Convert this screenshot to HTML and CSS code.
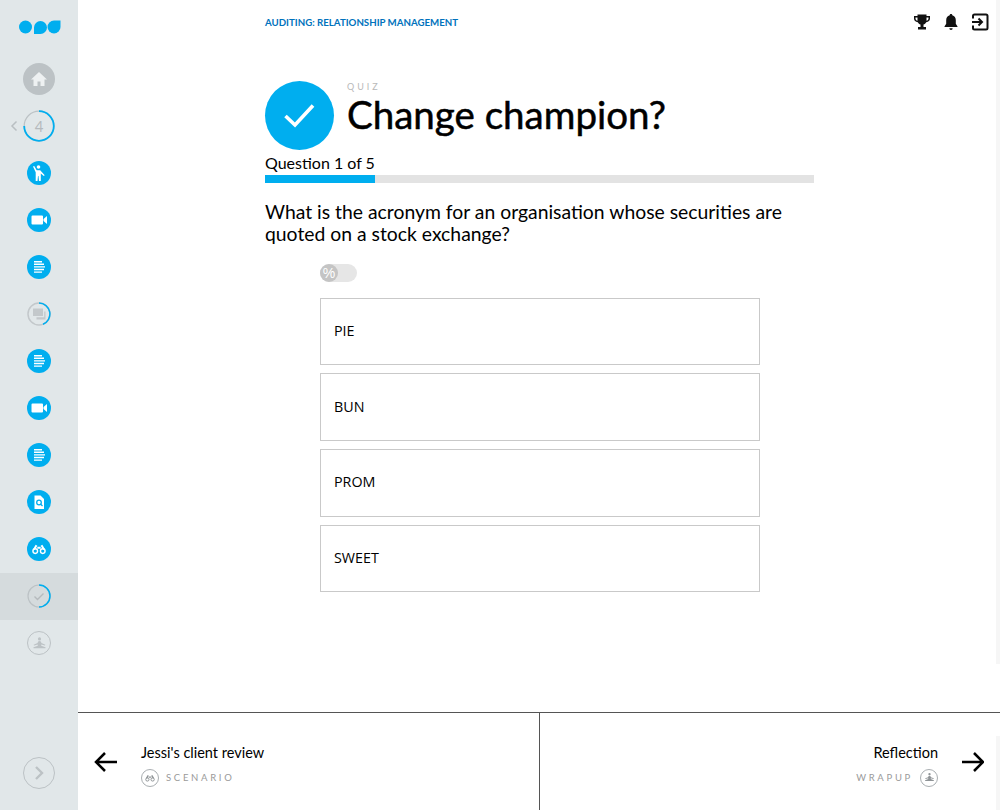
FILE: index.html
```html
<!DOCTYPE html>
<html lang="en">
<head>
    <meta charset="UTF-8">
    <title>Change champion?</title>
    <link rel="stylesheet" href="styles.css">
</head>
<body>
    <svg class="defs" width="0" height="0">
        <symbol id="lines" viewBox="0 0 24 24">
            <path d="M7 6h8v1.400H7zM7 8.600h10v1.400H7zM7 11.200h11v1.400H7zM7 13.800h10v1.400H7zM7 16.400h8v1.400H7z" fill="#fff"/>
        </symbol>
        <symbol id="video" viewBox="0 0 24 24">
            <path d="M5.500 7.500h9.500a1 1 0 0 1 1 1v7a1 1 0 0 1-1 1H5.500a1 1 0 0 1-1-1v-7a1 1 0 0 1 1-1zM16.500 11l3.500-3v8l-3.500-3z" fill="#fff"/>
        </symbol>
        <symbol id="binoculars" viewBox="0 0 24 24">
            <path d="M9 7.500l-3 5M15 7.500l3 5M10 10.500h4" stroke="currentColor" stroke-width="2.400" fill="none"/>
            <circle cx="7.500" cy="14.500" r="2.800" stroke="currentColor" stroke-width="1.700" fill="none"/>
            <circle cx="16.500" cy="14.500" r="2.800" stroke="currentColor" stroke-width="1.700" fill="none"/>
        </symbol>
        <symbol id="meditate" viewBox="3 3 18 18">
            <circle cx="12" cy="6.500" r="1.900"/>
            <path d="M12 9c1.500 0 2 1 2.300 2.400l4.700 2-.5 1-4.400-1.300v1.500l4.900 2c.6.300.4 1.200-.3 1.200H5.300c-.7 0-.9-.9-.3-1.200l4.900-2v-1.500l-4.400 1.300-.5-1 4.700-2C10 10 10.500 9 12 9z"/>
        </symbol>
    </svg>

    <nav class="sidebar">
        <svg class="logo" width="42" height="14" viewBox="0 0 42 14">
            <circle cx="6.500" cy="7" r="6.500" fill="#00aeef"/>
            <path d="M15 14h6.500A6.500 6.500 0 1 0 15 7.500z" fill="#00aeef"/>
            <path d="M41.500 0.500H35A6.500 6.500 0 1 0 41.500 7z" fill="#00aeef"/>
        </svg>
        <ul class="steps">
            <li class="step">
                <span class="home">
                    <svg width="18" height="18" viewBox="0 0 18 18"><path d="M9 2L1 9.500h2.500V16h4v-4.500h3V16h4V9.500H17z" fill="#eef1f2"/></svg>
                </span>
            </li>
            <li class="step">
                <svg class="back" width="8" height="12" viewBox="0 0 8 12"><path d="M6.500 1.500L2 6l4.500 4.500" stroke="#b9bfc2" stroke-width="1.500" fill="none"/></svg>
                <svg width="32" height="32" viewBox="0 0 32 32">
                    <circle cx="16" cy="16" r="14.800" fill="none" stroke="#bcc2c5" stroke-width="1.200"/>
                    <path d="M16 1.200A14.800 14.800 0 1 1 1.200 16" fill="none" stroke="#00aeef" stroke-width="1.800"/>
                </svg>
                <span class="step-num">4</span>
            </li>
            <li class="step">
                <span class="dot">
                    <svg width="24" height="24" viewBox="0 0 24 24">
                        <circle cx="11.500" cy="6" r="1.800" fill="#fff"/>
                        <path d="M6 5.500l1.200-.5 2.500 4.200h3.500l4.500 5-.9.9-3-2.600v7.500h-1.800l-.5-5h-.5l-.5 5H8.700v-8.800z" fill="#fff"/>
                    </svg>
                </span>
            </li>
            <li class="step"><span class="dot"><svg width="24" height="24"><use href="#video"/></svg></span></li>
            <li class="step"><span class="dot"><svg width="24" height="24"><use href="#lines"/></svg></span></li>
            <li class="step">
                <svg width="24" height="24" viewBox="0 0 24 24">
                    <circle cx="12" cy="12" r="11" fill="none" stroke="#c3c8cb" stroke-width="1.500"/>
                    <path d="M12 1a11 11 0 0 1 4 21.200" fill="none" stroke="#00aeef" stroke-width="1.500"/>
                    <path d="M6 6.500h10v7.500H6z" fill="#c3c8cb"/>
                    <path d="M17.200 9.500h1.300v8h-9v-2.200h7.700z" fill="#c3c8cb"/>
                </svg>
            </li>
            <li class="step"><span class="dot"><svg width="24" height="24"><use href="#lines"/></svg></span></li>
            <li class="step"><span class="dot"><svg width="24" height="24"><use href="#video"/></svg></span></li>
            <li class="step"><span class="dot"><svg width="24" height="24"><use href="#lines"/></svg></span></li>
            <li class="step">
                <span class="dot">
                    <svg width="24" height="24" viewBox="0 0 24 24">
                        <path d="M7.500 5.500h6l3.500 3.500v10H7.500z" fill="#fff"/>
                        <circle cx="12" cy="12.500" r="2.300" fill="none" stroke="#00aeef" stroke-width="1.300"/>
                        <path d="M13.500 14l2 2" stroke="#00aeef" stroke-width="1.300"/>
                    </svg>
                </span>
            </li>
            <li class="step"><span class="dot dot-binoculars"><svg width="20" height="20"><use href="#binoculars"/></svg></span></li>
            <li class="step step-current">
                <svg width="24" height="24" viewBox="0 0 24 24">
                    <circle cx="12" cy="12" r="11" fill="none" stroke="#bcc2c5" stroke-width="1.200"/>
                    <path d="M12 1a11 11 0 0 1 0 22" fill="none" stroke="#00aeef" stroke-width="1.500"/>
                    <path d="M7.500 12.500l3 3 6-6" fill="none" stroke="#b5babd" stroke-width="1.400"/>
                </svg>
            </li>
            <li class="step">
                <span class="ring"><svg class="ring-icon" width="15" height="15"><use href="#meditate"/></svg></span>
            </li>
        </ul>
        <span class="next-btn">
            <svg width="12" height="16" viewBox="0 0 12 16"><path d="M3 2l6 6-6 6" stroke="#bcc2c5" stroke-width="2.400" fill="none"/></svg>
        </span>
    </nav>

    <div class="page">
        <header class="topbar">
            <a class="course">AUDITING: RELATIONSHIP MANAGEMENT</a>
            <div class="top-icons">
                <svg width="18" height="18" viewBox="0 0 18 18">
                    <path d="M4.500 1.500h9v1.500H17v2.500c0 2-1.500 3.500-3.800 3.700-.6 1.300-1.500 2-2.700 2.300V14H13v2.500H5V14h2.500v-2.500C6.300 11.200 5.400 10.500 4.800 9.200 2.500 9 1 7.500 1 5.500V3h3.500zM2.500 4.500v1c0 1 .8 2 2 2.200V4.500zM13.500 4.500v3.200c1.200-.2 2-1.200 2-2.200v-1z" fill="#111"/>
                </svg>
                <svg width="18" height="18" viewBox="0 0 18 18">
                    <path d="M9 1c.8 0 1.300.5 1.300 1.200 2.300.6 3.500 2.500 3.500 5v3.500l1.700 2.800v.5h-13v-.5l1.700-2.800V7.200c0-2.500 1.200-4.400 3.500-5C7.700 1.500 8.200 1 9 1zM7.300 15.300h3.400a1.700 1.700 0 0 1-3.400 0z" fill="#111"/>
                </svg>
                <svg width="18" height="18" viewBox="0 0 18 18">
                    <path d="M2 5.500V3a1.500 1.500 0 0 1 1.500-1.500h11.500A1.500 1.500 0 0 1 16.500 3v12a1.500 1.500 0 0 1-1.500 1.500H3.500A1.500 1.500 0 0 1 2 15v-2.500" fill="none" stroke="#111" stroke-width="2"/>
                    <path d="M1 9h9M7.500 5.500L11 9l-3.500 3.500" fill="none" stroke="#111" stroke-width="2"/>
                </svg>
            </div>
        </header>

        <main class="content">
            <div class="quiz-head">
                <span class="quiz-badge">
                    <svg width="36" height="36" viewBox="0 0 36 36"><path d="M3.500 18l9.500 9L31 7.500" fill="none" stroke="#fff" stroke-width="3.600"/></svg>
                </span>
                <div>
                    <div class="quiz-label">QUIZ</div>
                    <h1>Change champion?</h1>
                </div>
            </div>
            <div class="progress-label">Question 1 of 5</div>
            <div class="progress"><div class="progress-fill" style="width: 20%"></div></div>
            <p class="question">What is the acronym for an organisation whose securities are quoted on a stock exchange?</p>
            <div class="answers">
                <div class="toggle"><span class="toggle-knob">%</span></div>
                <div class="answer">PIE</div>
                <div class="answer">BUN</div>
                <div class="answer">PROM</div>
                <div class="answer">SWEET</div>
            </div>
        </main>

        <footer class="pager">
            <a class="pager-link">
                <svg width="24" height="24" viewBox="0 0 24 24"><path d="M23 12H2M11 3l-9 9 9 9" fill="none" stroke="#000" stroke-width="2.500"/></svg>
                <div class="pager-text">
                    <div class="pager-title">Jessi's client review</div>
                    <div class="pager-sub">
                        <span class="ring ring-small"><svg class="ring-icon" width="14" height="14"><use href="#binoculars"/></svg></span>
                        <span>SCENARIO</span>
                    </div>
                </div>
            </a>
            <a class="pager-link pager-right">
                <div class="pager-text">
                    <div class="pager-title">Reflection</div>
                    <div class="pager-sub">
                        <span>WRAPUP</span>
                        <span class="ring ring-small"><svg class="ring-icon" width="11" height="11"><use href="#meditate"/></svg></span>
                    </div>
                </div>
                <svg width="24" height="24" viewBox="0 0 24 24"><path d="M2 12h21M14 3l9 9-9 9" fill="none" stroke="#000" stroke-width="2.500"/></svg>
            </a>
        </footer>
    </div>
</body>
</html>
```

FILE: styles.css
```css
* {
    box-sizing: border-box;
}
html, body {
    height: 100%;
}
body {
    margin: 0;
    display: flex;
    height: 810px;
    overflow: hidden;
    font-family: 'Lato', sans-serif;
    color: #000;
    background-color: white;
}
.defs {
    position: absolute;
}
.sidebar {
    width: 78px;
    flex-shrink: 0;
    display: flex;
    flex-direction: column;
    align-items: center;
    background-color: #e1e7e9;
}
.logo {
    margin: 20px 0 0 2px;
    display: block;
}
.steps {
    list-style: none;
    margin: 21.500px 0 0;
    padding: 0;
    width: 100%;
}
.step {
    position: relative;
    height: 47px;
    display: flex;
    align-items: center;
    justify-content: center;
}
.step-current {
    background-color: #d5dbdd;
}
.home {
    width: 32px;
    height: 32px;
    border-radius: 50%;
    background-color: #bcc2c5;
    display: flex;
    align-items: center;
    justify-content: center;
}
.back {
    position: absolute;
    left: 10px;
    top: 17px;
}
.step-num {
    position: absolute;
    left: 0;
    right: 0;
    top: 14px;
    text-align: center;
    font-size: 15px;
    color: #b5babd;
}
.dot {
    width: 24px;
    height: 24px;
    border-radius: 50%;
    background-color: #00aeef;
    display: block;
}
.dot svg {
    display: block;
}
.dot-binoculars {
    color: white;
    padding: 2px;
}
.ring {
    width: 24px;
    height: 24px;
    border-radius: 50%;
    border: 1.500px solid #bcc2c5;
    display: flex;
    align-items: center;
    justify-content: center;
    color: #bcc2c5;
}
.ring-icon {
    fill: currentColor;
}
.ring-small {
    width: 18px;
    height: 18px;
    border-color: #a9aeb1;
    color: #8f9497;
}
.next-btn {
    margin-top: auto;
    margin-bottom: 21px;
    width: 32px;
    height: 32px;
    border-radius: 50%;
    border: 1.200px solid #bcc2c5;
    display: flex;
    align-items: center;
    justify-content: center;
}
.page {
    position: relative;
    flex: 1;
    display: flex;
    flex-direction: column;
    min-width: 0;
}
/* faint scroll strip down the right edge */
.page::before {
    content: "";
    position: absolute;
    top: 0;
    right: 0;
    width: 4px;
    height: 664px;
    background-color: #f6f6f6;
}
.topbar {
    height: 44px;
    display: flex;
    align-items: center;
    justify-content: space-between;
    padding: 0 11px 0 187px;
}
.course {
    font-size: 9.700px;
    font-weight: 700;
    color: #0072bc;
}
.top-icons {
    display: flex;
    gap: 11px;
}
.content {
    flex: 1;
    padding: 37px 186px 0 187px;
}
.quiz-head {
    display: flex;
    gap: 13px;
}
.quiz-badge {
    width: 69px;
    height: 69px;
    border-radius: 50%;
    background-color: #00aeef;
    display: flex;
    align-items: center;
    justify-content: center;
}
.quiz-label {
    font-size: 9px;
    line-height: 12px;
    letter-spacing: 3px;
    color: #b9b9b9;
}
h1 {
    margin: 0;
    font-size: 38.500px;
    line-height: 42px;
    font-weight: 400;
    -webkit-text-stroke: 0.5px #000;
}
.progress-label {
    margin-top: 2px;
    font-size: 16px;
    line-height: 22px;
}
.progress {
    height: 8px;
    margin-top: 1px;
    background-color: #e3e3e3;
}
.progress-fill {
    height: 100%;
    background-color: #00aeef;
}
.question {
    margin: 18px 0 0;
    font-size: 19.350px;
    line-height: 22px;
}
.answers {
    margin: 19px 54px 0 55px;
}
.toggle {
    width: 37px;
    height: 18px;
    border-radius: 9px;
    background-color: #e6e6e6;
    margin-bottom: 15.800px;
}
.toggle-knob {
    display: block;
    width: 18px;
    height: 18px;
    border-radius: 50%;
    background-color: #c4c4c4;
    color: white;
    font-family: 'Liberation Sans', sans-serif;
    font-size: 14px;
    line-height: 18px;
    text-align: center;
}
.answer {
    height: 67.600px;
    margin-bottom: 8px;
    padding: 0 0 2px 13px;
    display: flex;
    align-items: center;
    border: 1px solid #c9c9c9;
    font-size: 14.300px;
    font-family: 'Open Sans', sans-serif;
}
.pager {
    height: 98px;
    display: flex;
    border-top: 1px solid #555;
}
.pager-link {
    position: relative;
    flex: 1;
    display: flex;
    align-items: center;
    gap: 23px;
    padding: 0 16px;
}
.pager-right {
    justify-content: flex-end;
    border-left: 1px solid #555;
    gap: 22px;
}
.pager-right::after {
    content: "";
    position: absolute;
    right: 0;
    top: 23px;
    bottom: 0;
    width: 4px;
    background-color: #f6f6f6;
}
.pager-text {
    padding-top: 7px;
}
.pager-title {
    font-size: 14.500px;
    line-height: 18px;
}
.pager-sub {
    margin-top: 7px;
    display: flex;
    align-items: center;
    gap: 7px;
    font-size: 9.500px;
    letter-spacing: 2.700px;
    color: #9a9a9a;
}
.pager-right .pager-text {
    text-align: right;
}
.pager-right .pager-sub {
    justify-content: flex-end;
}
```
